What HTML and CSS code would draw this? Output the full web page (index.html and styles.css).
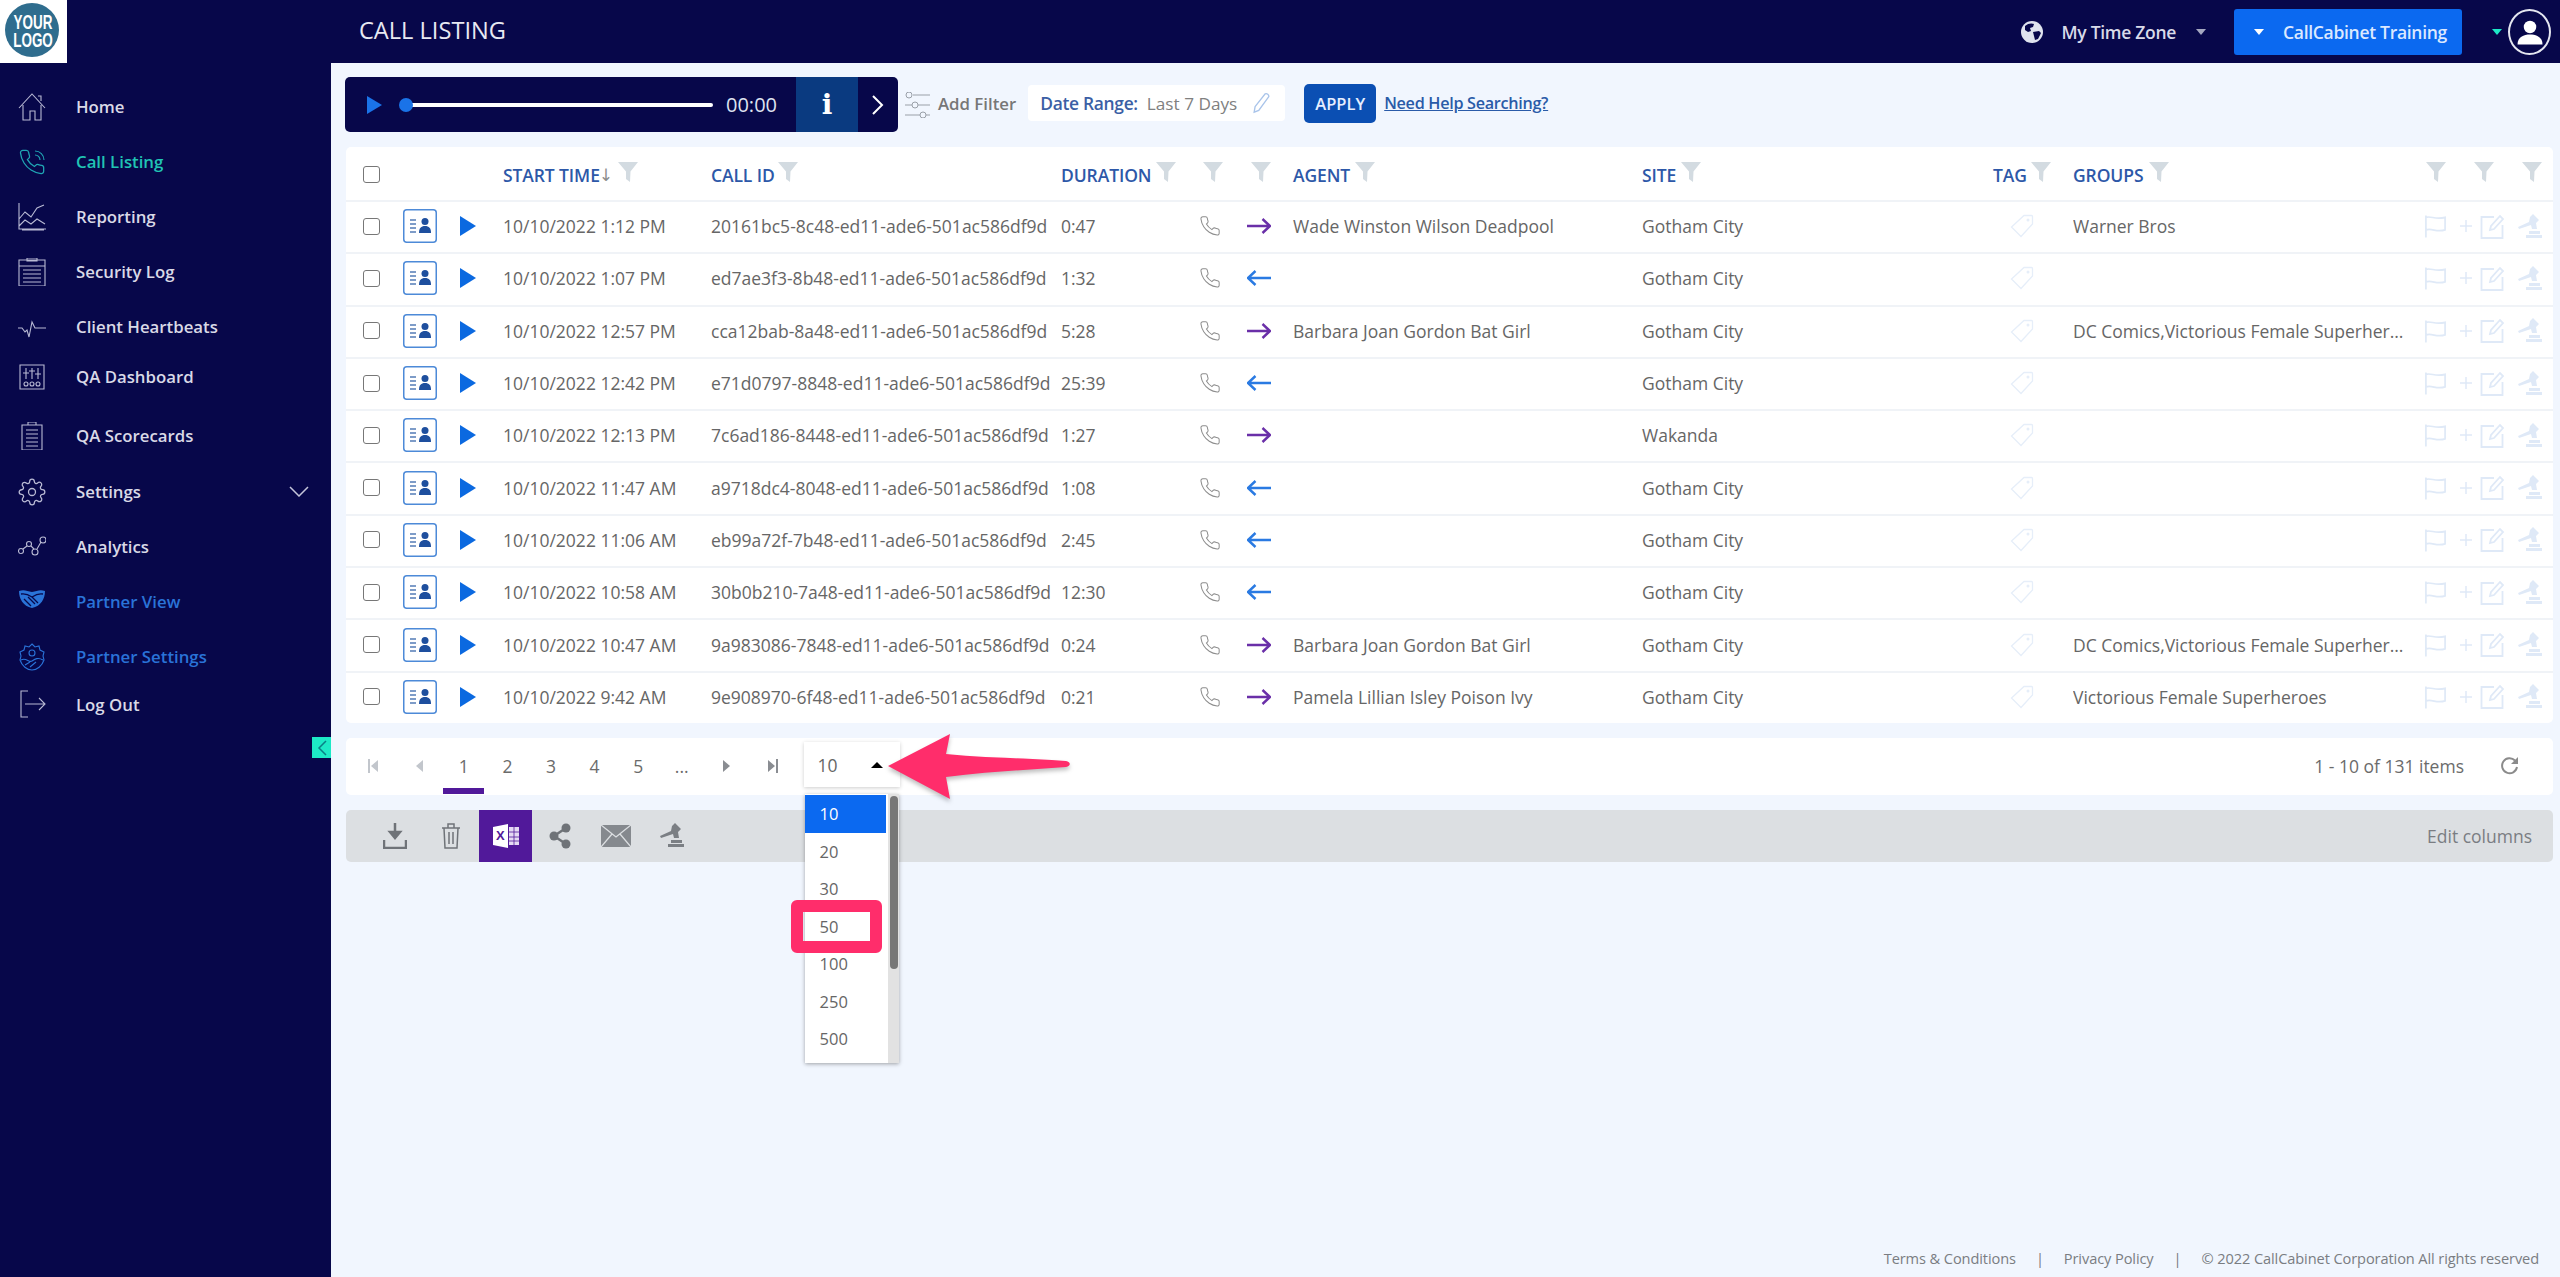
FILE: index.html
```html
<!DOCTYPE html>
<html lang="en">
<head>
<meta charset="utf-8">
<title>Call Listing</title>
<link rel="stylesheet" href="styles.css">
</head>
<body>
<svg class="sprite" aria-hidden="true">
  <symbol id="i-filter" viewBox="0 0 20 20"><path d="M0 0h20L12.5 9.5 12 20l-4-3V9.500z" fill="currentColor"/></symbol>
  <symbol id="i-phone" viewBox="0 0 24 24"><path fill="none" stroke="currentColor" stroke-width="1.1" d="M22 16.920v3a2 2 0 0 1-2.180 2 19.790 19.790 0 0 1-8.630-3.070 19.500 19.500 0 0 1-6-6 19.790 19.790 0 0 1-3.070-8.670A2 2 0 0 1 4.110 2h3a2 2 0 0 1 2 1.720 12.840 12.840 0 0 0 .7 2.810 2 2 0 0 1-.45 2.110L8.090 9.910a16 16 0 0 0 6 6l1.270-1.270a2 2 0 0 1 2.110-.45 12.840 12.840 0 0 0 2.810.7A2 2 0 0 1 22 16.92z"/></symbol>
  <symbol id="i-right" viewBox="0 0 24 16"><path fill="none" stroke="currentColor" stroke-width="2.400" d="M0 8h23M15.500 1l7.500 7-7.500 7"/></symbol>
  <symbol id="i-left" viewBox="0 0 24 16"><path fill="none" stroke="currentColor" stroke-width="2.400" d="M24 8H1M8.500 1L1 8l7.500 7"/></symbol>
  <symbol id="i-tag" viewBox="0 0 24 24"><path fill="none" stroke="currentColor" stroke-width="1.300" d="M14 1.500h7.500a1 1 0 0 1 1 1V10L11 22.500 1.500 13z"/><circle cx="18" cy="6" r="1.500" fill="currentColor"/></symbol>
  <symbol id="i-file" viewBox="0 0 34 34"><rect x=".75" y=".75" width="32.500" height="32.500" rx="3" fill="#fff" stroke="#4d8ad8" stroke-width="1.500"/><path d="M7 10h6v2H7zM7 14h6v2H7zM7 18h6v2H7zM7 22h6v2H7z" fill="#7e9cc8"/><circle cx="22" cy="12.500" r="3.500" fill="#1e4f9e"/><path d="M16 24c0-5 2-7 6-7s6 2 6 7z" fill="#1e4f9e"/></symbol>
  <symbol id="i-flag" viewBox="0 0 24 24"><path fill="none" stroke="currentColor" stroke-width="1.800" d="M2 1v23M2 3c6-2 9 3 20 0v13c-9 3-13-2-20 0"/></symbol>
  <symbol id="i-plus" viewBox="0 0 12 12"><path fill="none" stroke="currentColor" stroke-width="1.500" d="M6 0v12M0 6h12"/></symbol>
  <symbol id="i-edit" viewBox="0 0 25 25"><path fill="none" stroke="currentColor" stroke-width="1.800" d="M14 3H1.500v21h21V11M10 16l1-4L20 2l3 3-9 10z"/></symbol>
  <symbol id="i-gavel" viewBox="0 0 25 25"><path fill="currentColor" d="M12 3l3-3 6 6-3 3 1 6h-5l-1-4-12 4-1-2 11-5zM11 17h11v3H11zM8 21h16v3H8z"/></symbol>
  <symbol id="i-gear" viewBox="0 0 24 24"><circle cx="12" cy="12" r="3" fill="none" stroke="currentColor"/><path fill="none" stroke="currentColor" d="M19.400 15a1.650 1.650 0 0 0 .33 1.820l.06.06a2 2 0 0 1 0 2.830 2 2 0 0 1-2.830 0l-.06-.06a1.650 1.650 0 0 0-1.820-.33 1.650 1.650 0 0 0-1 1.510V21a2 2 0 0 1-2 2 2 2 0 0 1-2-2v-.09A1.650 1.650 0 0 0 9 19.400a1.650 1.650 0 0 0-1.820.33l-.06.06a2 2 0 0 1-2.830 0 2 2 0 0 1 0-2.830l.06-.06a1.650 1.650 0 0 0 .33-1.820 1.650 1.650 0 0 0-1.510-1H3a2 2 0 0 1-2-2 2 2 0 0 1 2-2h.09A1.650 1.650 0 0 0 4.600 9a1.650 1.650 0 0 0-.33-1.820l-.06-.06a2 2 0 0 1 0-2.830 2 2 0 0 1 2.830 0l.06.06a1.650 1.650 0 0 0 1.820.33H9a1.650 1.650 0 0 0 1-1.510V3a2 2 0 0 1 2-2 2 2 0 0 1 2 2v.09a1.650 1.650 0 0 0 1 1.510 1.650 1.650 0 0 0 1.820-.33l.06-.06a2 2 0 0 1 2.830 0 2 2 0 0 1 0 2.830l-.06.06a1.650 1.650 0 0 0-.33 1.820V9a1.650 1.650 0 0 0 1.510 1H21a2 2 0 0 1 2 2 2 2 0 0 1-2 2h-.09a1.650 1.650 0 0 0-1.510 1z"/></symbol>
  <symbol id="i-hands" viewBox="0 0 28 28"><path fill="currentColor" d="M1 3c5-2 8 0 13 1 5-1 8-3 13-1 0 8-4 15-13 17C5 18 1 11 1 3z"/><path fill="none" stroke="#07074a" stroke-width="1.300" d="M3 6c5-1 8 1 11 3 3-2 6-4 11-3M6 11l7 7M10 9l7 7M14 9l6 6"/></symbol>
</svg>

<header class="topbar">
  <div class="logo">
    <svg viewBox="0 0 67 63" width="67" height="63">
      <circle cx="32" cy="30" r="27" fill="#2f6d8e"/>
      <text transform="translate(33 29) scale(1 1.5)" class="logo-text">YOUR</text>
      <text transform="translate(33 47) scale(1 1.5)" class="logo-text">LOGO</text>
    </svg>
  </div>
  <h1 class="page-title">CALL LISTING</h1>
  <div class="top-right">
    <svg class="globe" viewBox="0 0 24 24" width="24" height="24"><circle cx="12" cy="12" r="11" fill="#dfe3ee"/><path fill="#07074a" d="M5 6c3-3 7-3 9-2l-1 3-3 1 1 3-3 1-3-2zM13 12l6-1 2 2-3 6-3 1-1-4z"/></svg>
    <span class="tz-label">My Time Zone</span>
    <span class="caret caret-grey"></span>
    <button class="org-btn"><span class="caret caret-white"></span><span>CallCabinet Training</span></button>
    <span class="caret caret-teal"></span>
    <span class="avatar"><svg viewBox="0 0 24 24" width="30" height="30"><circle cx="12" cy="8" r="5" fill="#fff"/><path d="M2 22c0-6 5-8 10-8s10 2 10 8z" fill="#fff"/></svg></span>
  </div>
</header>

<div class="shell">
  <nav class="sidebar">
    <a class="nav-item"><svg class="nav-icon" viewBox="0 0 28 28"><path d="M1 15L14 1l13 14M5 12v15h7v-9h5v9h6V12M20 3h3v5" /></svg><span>Home</span></a>
    <a class="nav-item is-active"><svg class="nav-icon" viewBox="0 0 28 28"><use href="#i-phone" width="28" height="28"/><path d="M17 7a5 5 0 0 1 5 5M17 3a9 9 0 0 1 9 9"/></svg><span>Call Listing</span></a>
    <a class="nav-item"><svg class="nav-icon" viewBox="0 0 28 28"><path d="M1 0v26h27M1 16l6-7 6 5 6-9 7-3M1 23l6-6 6 4 6-5 8 5M4 27h22"/></svg><span>Reporting</span></a>
    <a class="nav-item"><svg class="nav-icon" viewBox="0 0 28 28"><path d="M1 2h26v26H1zM1 8h26M9 0h10v3H9zM5 12h18M5 16h18M5 20h18M5 24h18" /></svg><span>Security Log</span></a>
    <a class="nav-item"><svg class="nav-icon" viewBox="0 0 28 28"><path d="M0 15h4l3 4 2-2 2 7 3-15 3 6h11"/></svg><span>Client Heartbeats</span></a>
    <a class="nav-item nav-up"><svg class="nav-icon" viewBox="0 0 28 28"><path d="M2 2h24v24H2zM8 5v11M14 5v11M20 5v11M5 10h6M11 8h6M17 11h6"/><circle cx="8" cy="21" r="2"/><circle cx="14" cy="21" r="2"/><circle cx="20" cy="21" r="2"/></svg><span>QA Dashboard</span></a>
    <a class="nav-item nav-down"><svg class="nav-icon" viewBox="0 0 28 28"><path d="M4 3h20v25H4zM10 3V0h8v3M8 8h12M8 12h12M8 16h12M8 20h12M8 24h12"/></svg><span>QA Scorecards</span></a>
    <a class="nav-item"><svg class="nav-icon nav-solid" viewBox="0 0 28 28"><use href="#i-gear" width="28" height="28"/></svg><span>Settings</span><svg class="nav-chevron" viewBox="0 0 20 11"><path d="M1 1l9 9 9-9"/></svg></a>
    <a class="nav-item"><svg class="nav-icon" viewBox="0 0 28 28"><circle cx="3" cy="18" r="2.500"/><circle cx="11" cy="11" r="2.500"/><circle cx="17" cy="19" r="3"/><circle cx="25" cy="7" r="3"/><path d="M5 16l4-3M13 13l3 3M19 16l4-7"/></svg><span>Analytics</span></a>
    <a class="nav-item is-partner"><svg class="nav-icon-fill" viewBox="0 0 28 28"><use href="#i-hands" width="28" height="28"/></svg><span>Partner View</span></a>
    <a class="nav-item is-partner"><svg class="nav-icon" viewBox="0 0 28 28"><path d="M14 1l3 3 4-1 1 4 4 2-1 4 1 4c-2 6-7 10-12 10S4 23 2 17l1-4-1-4 4-2 1-4 4 1z"/><circle cx="14" cy="10" r="3"/><path d="M3 17c5-3 8 3 11 1s6-4 11-1M7 22l5-3M12 24l6-5"/></svg><span>Partner Settings</span></a>
    <a class="nav-item nav-up-more"><svg class="nav-icon" viewBox="0 0 28 28"><path d="M10 1H3v26h7M7 14h20M21 8l6 6-6 6"/></svg><span>Log Out</span></a>
    <span class="collapse-tab"><svg viewBox="0 0 10 16" width="10" height="16"><path d="M9 1L2 8l7 7" fill="none" stroke="#0a7f86" stroke-width="1.500"/></svg></span>
  </nav>

  <main class="content">
    <section class="filter-bar">
      <div class="player">
        <svg class="player-play" viewBox="0 0 15 18" width="15" height="18"><path d="M0 0l15 9-15 9z" fill="#1a73e8"/></svg>
        <div class="player-track"><span class="player-knob"></span></div>
        <span class="player-time">00:00</span>
        <span class="player-info">i</span>
        <svg class="player-next" viewBox="0 0 12 20" width="12" height="20"><path d="M1 1l9 9-9 9" fill="none" stroke="#fff" stroke-width="2"/></svg>
      </div>
      <svg class="filter-icon" viewBox="0 0 25 26" width="25" height="26"><g fill="none" stroke="#9aa0a8"><path d="M8 3h17M0 13h7M13 13h12M0 23h15M21 23h4"/><circle cx="4" cy="3" r="3"/><circle cx="10" cy="13" r="3"/><circle cx="18" cy="23" r="3"/></g></svg>
      <span class="add-filter">Add Filter</span>
      <div class="date-box">
        <span class="date-label">Date Range:</span>
        <span class="date-value">Last 7 Days</span>
        <svg viewBox="0 0 20 24" width="19" height="22"><path d="M3 16L14 2a3 3 0 0 1 4 3L7 20l-5 2z" fill="none" stroke="#a9c4ea" stroke-width="1.500"/></svg>
      </div>
      <button class="apply-btn">APPLY</button>
      <a class="help-link">Need Help Searching?</a>
    </section>

    <section class="table">
      <div class="row head">
        <span class="c-check"><span class="check"></span></span>
        <span></span>
        <span></span>
        <span class="th th-time">START TIME<span class="sort">↓</span><svg class="fil"><use href="#i-filter"/></svg></span>
        <span class="th th-id">CALL ID<svg class="fil"><use href="#i-filter"/></svg></span>
        <span class="th th-dur">DURATION<svg class="fil"><use href="#i-filter"/></svg></span>
        <span class="th th-mini"><svg class="fil"><use href="#i-filter"/></svg></span>
        <span class="th th-mini"><svg class="fil"><use href="#i-filter"/></svg></span>
        <span class="th th-agent">AGENT<svg class="fil"><use href="#i-filter"/></svg></span>
        <span class="th th-site">SITE<svg class="fil"><use href="#i-filter"/></svg></span>
        <span class="th th-tag">TAG<svg class="fil"><use href="#i-filter"/></svg></span>
        <span class="th th-groups">GROUPS<svg class="fil"><use href="#i-filter"/></svg></span>
        <span class="th th-acts"><svg class="fil"><use href="#i-filter"/></svg><svg class="fil"><use href="#i-filter"/></svg><svg class="fil"><use href="#i-filter"/></svg></span>
      </div>

      <div class="row">
        <span class="c-check"><span class="check"></span></span><svg class="file"><use href="#i-file"/></svg><svg class="play" viewBox="0 0 16 20"><path d="M0 0l16 10L0 20z"/></svg>
        <span>10/10/2022 1:12 PM</span><span>20161bc5-8c48-ed11-ade6-501ac586df9d</span><span>0:47</span>
        <svg class="phone"><use href="#i-phone"/></svg><svg class="arrow out"><use href="#i-right"/></svg>
        <span>Wade Winston Wilson Deadpool</span><span>Gotham City</span><svg class="tag"><use href="#i-tag"/></svg><span class="groups">Warner Bros</span>
        <span class="acts"><svg class="a-flag"><use href="#i-flag"/></svg><svg class="a-plus"><use href="#i-plus"/></svg><svg class="a-edit"><use href="#i-edit"/></svg><svg class="a-gavel"><use href="#i-gavel"/></svg></span>
      </div>
      <div class="row">
        <span class="c-check"><span class="check"></span></span><svg class="file"><use href="#i-file"/></svg><svg class="play" viewBox="0 0 16 20"><path d="M0 0l16 10L0 20z"/></svg>
        <span>10/10/2022 1:07 PM</span><span>ed7ae3f3-8b48-ed11-ade6-501ac586df9d</span><span>1:32</span>
        <svg class="phone"><use href="#i-phone"/></svg><svg class="arrow in"><use href="#i-left"/></svg>
        <span></span><span>Gotham City</span><svg class="tag"><use href="#i-tag"/></svg><span class="groups"></span>
        <span class="acts"><svg class="a-flag"><use href="#i-flag"/></svg><svg class="a-plus"><use href="#i-plus"/></svg><svg class="a-edit"><use href="#i-edit"/></svg><svg class="a-gavel"><use href="#i-gavel"/></svg></span>
      </div>
      <div class="row">
        <span class="c-check"><span class="check"></span></span><svg class="file"><use href="#i-file"/></svg><svg class="play" viewBox="0 0 16 20"><path d="M0 0l16 10L0 20z"/></svg>
        <span>10/10/2022 12:57 PM</span><span>cca12bab-8a48-ed11-ade6-501ac586df9d</span><span>5:28</span>
        <svg class="phone"><use href="#i-phone"/></svg><svg class="arrow out"><use href="#i-right"/></svg>
        <span>Barbara Joan Gordon Bat Girl</span><span>Gotham City</span><svg class="tag"><use href="#i-tag"/></svg><span class="groups">DC Comics,Victorious Female Superheroes</span>
        <span class="acts"><svg class="a-flag"><use href="#i-flag"/></svg><svg class="a-plus"><use href="#i-plus"/></svg><svg class="a-edit"><use href="#i-edit"/></svg><svg class="a-gavel"><use href="#i-gavel"/></svg></span>
      </div>
      <div class="row">
        <span class="c-check"><span class="check"></span></span><svg class="file"><use href="#i-file"/></svg><svg class="play" viewBox="0 0 16 20"><path d="M0 0l16 10L0 20z"/></svg>
        <span>10/10/2022 12:42 PM</span><span>e71d0797-8848-ed11-ade6-501ac586df9d</span><span>25:39</span>
        <svg class="phone"><use href="#i-phone"/></svg><svg class="arrow in"><use href="#i-left"/></svg>
        <span></span><span>Gotham City</span><svg class="tag"><use href="#i-tag"/></svg><span class="groups"></span>
        <span class="acts"><svg class="a-flag"><use href="#i-flag"/></svg><svg class="a-plus"><use href="#i-plus"/></svg><svg class="a-edit"><use href="#i-edit"/></svg><svg class="a-gavel"><use href="#i-gavel"/></svg></span>
      </div>
      <div class="row">
        <span class="c-check"><span class="check"></span></span><svg class="file"><use href="#i-file"/></svg><svg class="play" viewBox="0 0 16 20"><path d="M0 0l16 10L0 20z"/></svg>
        <span>10/10/2022 12:13 PM</span><span>7c6ad186-8448-ed11-ade6-501ac586df9d</span><span>1:27</span>
        <svg class="phone"><use href="#i-phone"/></svg><svg class="arrow out"><use href="#i-right"/></svg>
        <span></span><span>Wakanda</span><svg class="tag"><use href="#i-tag"/></svg><span class="groups"></span>
        <span class="acts"><svg class="a-flag"><use href="#i-flag"/></svg><svg class="a-plus"><use href="#i-plus"/></svg><svg class="a-edit"><use href="#i-edit"/></svg><svg class="a-gavel"><use href="#i-gavel"/></svg></span>
      </div>
      <div class="row">
        <span class="c-check"><span class="check"></span></span><svg class="file"><use href="#i-file"/></svg><svg class="play" viewBox="0 0 16 20"><path d="M0 0l16 10L0 20z"/></svg>
        <span>10/10/2022 11:47 AM</span><span>a9718dc4-8048-ed11-ade6-501ac586df9d</span><span>1:08</span>
        <svg class="phone"><use href="#i-phone"/></svg><svg class="arrow in"><use href="#i-left"/></svg>
        <span></span><span>Gotham City</span><svg class="tag"><use href="#i-tag"/></svg><span class="groups"></span>
        <span class="acts"><svg class="a-flag"><use href="#i-flag"/></svg><svg class="a-plus"><use href="#i-plus"/></svg><svg class="a-edit"><use href="#i-edit"/></svg><svg class="a-gavel"><use href="#i-gavel"/></svg></span>
      </div>
      <div class="row">
        <span class="c-check"><span class="check"></span></span><svg class="file"><use href="#i-file"/></svg><svg class="play" viewBox="0 0 16 20"><path d="M0 0l16 10L0 20z"/></svg>
        <span>10/10/2022 11:06 AM</span><span>eb99a72f-7b48-ed11-ade6-501ac586df9d</span><span>2:45</span>
        <svg class="phone"><use href="#i-phone"/></svg><svg class="arrow in"><use href="#i-left"/></svg>
        <span></span><span>Gotham City</span><svg class="tag"><use href="#i-tag"/></svg><span class="groups"></span>
        <span class="acts"><svg class="a-flag"><use href="#i-flag"/></svg><svg class="a-plus"><use href="#i-plus"/></svg><svg class="a-edit"><use href="#i-edit"/></svg><svg class="a-gavel"><use href="#i-gavel"/></svg></span>
      </div>
      <div class="row">
        <span class="c-check"><span class="check"></span></span><svg class="file"><use href="#i-file"/></svg><svg class="play" viewBox="0 0 16 20"><path d="M0 0l16 10L0 20z"/></svg>
        <span>10/10/2022 10:58 AM</span><span>30b0b210-7a48-ed11-ade6-501ac586df9d</span><span>12:30</span>
        <svg class="phone"><use href="#i-phone"/></svg><svg class="arrow in"><use href="#i-left"/></svg>
        <span></span><span>Gotham City</span><svg class="tag"><use href="#i-tag"/></svg><span class="groups"></span>
        <span class="acts"><svg class="a-flag"><use href="#i-flag"/></svg><svg class="a-plus"><use href="#i-plus"/></svg><svg class="a-edit"><use href="#i-edit"/></svg><svg class="a-gavel"><use href="#i-gavel"/></svg></span>
      </div>
      <div class="row">
        <span class="c-check"><span class="check"></span></span><svg class="file"><use href="#i-file"/></svg><svg class="play" viewBox="0 0 16 20"><path d="M0 0l16 10L0 20z"/></svg>
        <span>10/10/2022 10:47 AM</span><span>9a983086-7848-ed11-ade6-501ac586df9d</span><span>0:24</span>
        <svg class="phone"><use href="#i-phone"/></svg><svg class="arrow out"><use href="#i-right"/></svg>
        <span>Barbara Joan Gordon Bat Girl</span><span>Gotham City</span><svg class="tag"><use href="#i-tag"/></svg><span class="groups">DC Comics,Victorious Female Superheroes</span>
        <span class="acts"><svg class="a-flag"><use href="#i-flag"/></svg><svg class="a-plus"><use href="#i-plus"/></svg><svg class="a-edit"><use href="#i-edit"/></svg><svg class="a-gavel"><use href="#i-gavel"/></svg></span>
      </div>
      <div class="row">
        <span class="c-check"><span class="check"></span></span><svg class="file"><use href="#i-file"/></svg><svg class="play" viewBox="0 0 16 20"><path d="M0 0l16 10L0 20z"/></svg>
        <span>10/10/2022 9:42 AM</span><span>9e908970-6f48-ed11-ade6-501ac586df9d</span><span>0:21</span>
        <svg class="phone"><use href="#i-phone"/></svg><svg class="arrow out"><use href="#i-right"/></svg>
        <span>Pamela Lillian Isley Poison Ivy</span><span>Gotham City</span><svg class="tag"><use href="#i-tag"/></svg><span class="groups">Victorious Female Superheroes</span>
        <span class="acts"><svg class="a-flag"><use href="#i-flag"/></svg><svg class="a-plus"><use href="#i-plus"/></svg><svg class="a-edit"><use href="#i-edit"/></svg><svg class="a-gavel"><use href="#i-gavel"/></svg></span>
      </div>
    </section>

    <section class="pager">
      <span class="pg-nav"><svg viewBox="0 0 10 14" width="10" height="14"><path d="M0 0h2v14H0zM10 1v12L3 7z"/></svg></span>
      <span class="pg-nav"><svg viewBox="0 0 7 14" width="7" height="14"><path d="M7 1v12L0 7z"/></svg></span>
      <span class="pg-num is-current">1</span>
      <span class="pg-num">2</span>
      <span class="pg-num">3</span>
      <span class="pg-num">4</span>
      <span class="pg-num">5</span>
      <span class="pg-num">...</span>
      <span class="pg-nav pg-dark"><svg viewBox="0 0 7 14" width="7" height="14"><path d="M0 1v12l7-6z"/></svg></span>
      <span class="pg-nav pg-dark"><svg viewBox="0 0 10 14" width="10" height="14"><path d="M8 0h2v14H8zM0 1v12l7-6z"/></svg></span>
      <div class="size-select">
        <span>10</span><span class="caret-up"></span>
        <ul class="size-menu">
          <li class="is-selected">10</li><li>20</li><li>30</li><li>50</li><li>100</li><li>250</li><li>500</li>
          <li class="menu-scroll"><span class="menu-thumb"></span></li>
        </ul>
        <span class="highlight"></span>
        <svg class="callout" viewBox="0 0 182 66" width="182" height="66"><path d="M0 32L62 0l-4 20c40 4 80 4 120 7 5 1 5 5 0 6-40 3-82 5-120 10l4 22z" fill="#ff2d6b"/></svg>
      </div>
      <span class="pg-info">1 - 10 of 131 items</span>
      <svg class="pg-refresh" viewBox="0 0 20 20" width="20" height="20"><path d="M17 11a7.500 7.500 0 1 1-2-6.500" fill="none" stroke="#8b8b8b" stroke-width="2"/><path d="M18 1v7h-7z" fill="#8b8b8b"/></svg>
    </section>

    <section class="toolbar">
      <span class="tool"><svg viewBox="0 0 24 26" width="24" height="26"><path d="M12 0v13M7 9l5 6 5-6z" fill="#6f7378" stroke="#6f7378" stroke-width="2.500"/><path d="M1 17v8h22v-8" fill="none" stroke="#6f7378" stroke-width="2.500"/></svg></span>
      <span class="tool"><svg viewBox="0 0 20 26" width="20" height="26"><path d="M1 5h18M7 5V1h6v4M3 5l1 20h12l1-20M8 9v12M12 9v12" fill="none" stroke="#6f7378" stroke-width="1.500"/></svg></span>
      <span class="tool tool-on"><svg viewBox="0 0 26 24" width="26" height="24"><path d="M0 3l15-3v24L0 21z" fill="#fff"/><path d="M16 3h10v18H16z" fill="#e4d9f3"/><path d="M21 3v18M16 8h10M16 13h10M16 17h10" stroke="#51199a" stroke-width=".8"/><text x="3" y="16" class="xl-text">X</text></svg></span>
      <span class="tool"><svg viewBox="0 0 22 26" width="22" height="26"><path d="M17 5L5 13l12 8" fill="none" stroke="#6f7378" stroke-width="2.500"/><circle cx="17" cy="5" r="4.500" fill="#6f7378"/><circle cx="5" cy="13" r="4.500" fill="#6f7378"/><circle cx="17" cy="21" r="4.500" fill="#6f7378"/></svg></span>
      <span class="tool"><svg viewBox="0 0 30 22" width="30" height="22"><path d="M0 0h30v22H0z" fill="#85898e"/><path d="M0 0l15 12L30 0M0 22l11-13M30 22L19 9" fill="none" stroke="#dcdfe2" stroke-width="1.300"/></svg></span>
      <span class="tool"><svg class="tool-gavel"><use href="#i-gavel"/></svg></span>
      <span class="edit-cols">Edit columns</span>
    </section>

    <footer class="footer">
      <span>Terms &amp; Conditions</span><span class="sep">|</span><span>Privacy Policy</span><span class="sep">|</span><span>© 2022 CallCabinet Corporation All rights reserved</span>
    </footer>
  </main>
</div>
</body>
</html>
```
FILE: styles.css
```css
* { box-sizing: border-box; }
html, body { margin: 0; height: 100%; overflow: hidden; }
body {
  font-family: "Open Sans", "Liberation Sans", sans-serif;
  font-size: 17.500px;
  color: #666;
  background: #f1f6fe;
  display: flex;
  flex-direction: column;
}
.sprite { display: none; }

/* top bar */
.topbar {
  height: 63px;
  flex: none;
  background: #07074a;
  display: flex;
  align-items: center;
  color: #fff;
}
.logo { width: 67px; height: 63px; background: #fff; flex: none; }
.logo svg { display: block; }
.logo-text {
  font-family: "Liberation Sans", sans-serif;
  font-weight: 700;
  font-size: 13.500px;
  fill: #fff;
  text-anchor: middle;
}
.page-title {
  margin: -4px 0 0 292px;
  font-size: 23.600px;
  font-weight: 500;
  color: #e8e9f2;
}
.top-right { margin-left: auto; display: flex; align-items: center; padding-right: 9px; }
.globe { margin-right: 18px; }
.tz-label { font-size: 17.500px; font-weight: 600; color: #d8dae8; letter-spacing: -.3px; }
.caret { width: 0; height: 0; border-left: 5px solid transparent; border-right: 5px solid transparent; display: inline-block; }
.caret-grey { border-top: 6px solid #a4a7c0; margin: 0 28px 0 20px; }
.caret-white { border-top: 6px solid #fff; margin-right: 19px; }
.caret-teal { border-top: 6px solid #1de9c6; margin: 0 6px 0 30px; }
.org-btn {
  width: 228px;
  height: 46px;
  border: 0;
  border-radius: 3px;
  background: #0b69f0;
  color: #dbe8ff;
  font: 600 17.500px "Open Sans", sans-serif;
  letter-spacing: -.3px;
  display: flex;
  align-items: center;
  padding: 0 0 0 20px;
}
.avatar {
  width: 43px;
  height: 46px;
  border: 2px solid #e4e6f0;
  border-radius: 50%;
  display: flex;
  align-items: center;
  justify-content: center;
}

/* layout */
.shell { flex: 1; display: flex; min-height: 0; }

/* sidebar */
.sidebar {
  width: 331px;
  flex: none;
  background: #07074a;
  padding-top: 16px;
  position: relative;
}
.nav-item {
  height: 55px;
  display: flex;
  align-items: center;
  padding-left: 18px;
  font-size: 16.800px;
  font-weight: 600;
  color: #d9d9e6;
}
.nav-up { margin-top: -3px; height: 51px; }
.nav-down { margin-top: 3px; height: 59px; padding-top: 2px; }
.nav-up-more { margin-top: -4px; height: 48px; }
.nav-icon { width: 28px; height: 28px; margin-right: 30px; fill: none; stroke: #b9bad4; stroke-width: 1.100; color: #b9bad4; flex: none; }
.nav-icon-fill { width: 28px; height: 28px; margin-right: 30px; color: #2a73d8; flex: none; }
.nav-solid { stroke: none; }
.nav-chevron { width: 20px; height: 11px; margin-left: auto; margin-right: 22px; fill: none; stroke: #c4c5da; stroke-width: 1.500; }
.is-active { color: #20c4b4; }
.is-active .nav-icon { stroke: #20a6b4; color: #20a6b4; }
.is-partner { color: #2a73d8; }
.is-partner .nav-icon { stroke: #2a73d8; }
.collapse-tab {
  position: absolute;
  left: 312px;
  top: 674px;
  width: 19px;
  height: 21px;
  background: #1de9c6;
  display: flex;
  align-items: center;
  justify-content: center;
}

/* main */
.content {
  flex: 1;
  min-width: 0;
  padding: 14px 7px 0 14px;
  display: flex;
  flex-direction: column;
}

/* filter bar */
.filter-bar { height: 55px; display: flex; align-items: center; flex: none; }
.player {
  width: 553px;
  height: 55px;
  background: #07074a;
  border-radius: 5px;
  display: flex;
  align-items: center;
  overflow: hidden;
  padding-left: 22px;
}
.player-play { flex: none; }
.player-track { position: relative; width: 307px; height: 4px; background: #fff; margin-left: 24px; border-radius: 2px; }
.player-knob { position: absolute; left: -7px; top: -5px; width: 14px; height: 14px; border-radius: 50%; background: #1a73e8; }
.player-time { margin-left: 13px; width: 70px; font-size: 20px; color: #dfe2f0; }
.player-info {
  width: 62px;
  height: 55px;
  background: #0a3a80;
  color: #fff;
  font: 700 28px "DejaVu Serif", serif;
  display: flex;
  align-items: center;
  justify-content: center;
}
.player-next { margin-left: 14px; }
.filter-icon { margin-left: 7px; }
.add-filter { margin: 0 0 3px 8px; font-size: 16.800px; font-weight: 600; color: #777; }
.date-box {
  width: 257px;
  height: 36px;
  margin: 0 0 3px 12px;
  background: #fff;
  border-radius: 4px;
  display: flex;
  align-items: center;
  padding-left: 12px;
}
.date-label { font-size: 17.400px; font-weight: 600; color: #3b5fa5; letter-spacing: -.3px; }
.date-value { margin-left: 9px; margin-right: 15px; font-size: 17.200px; color: #808080; }
.apply-btn {
  width: 72px;
  height: 39px;
  margin: 0 0 3px 19px;
  border: 0;
  border-radius: 5px;
  background: #0b4fb3;
  color: #e6eeff;
  font: 600 16.500px "Open Sans", sans-serif;
  padding: 0;
}
.help-link { margin: 0 0 3px 8px; font-size: 16.200px; font-weight: 600; color: #2a5ba8; text-decoration: underline; letter-spacing: -.3px; }

/* table */
.table {
  margin: 15px 0 0 1px;
  background: #fff;
  border-radius: 5px;
  flex: none;
}
.row {
  height: 52.300px;
  display: grid;
  grid-template-columns: 57px 57px 43px 208px 350px 138px 48px 46px 349px 351px 80px 351px 1fr;
  align-items: center;
  border-top: 2px solid #f0f3f7;
  padding-bottom: 2px;
  white-space: nowrap;
}
.row.head { height: 53px; border-top: 0; padding: 2px 0 0; }
.c-check { padding-left: 17px; display: flex; }
.check { width: 17px; height: 17px; border: 1.500px solid #777; border-radius: 3px; background: #fff; }
.file { width: 34px; height: 34px; }
.play { width: 16px; height: 20px; fill: #0b69e0; }
.phone { width: 22px; height: 22px; color: #8d8d8d; }
.arrow { width: 24px; height: 16px; }
.arrow.out { color: #6a2fa8; }
.arrow.in { color: #2a7ae2; }
.tag { width: 24px; height: 24px; margin-left: 17px; color: #e6eef9; }
.groups { padding-right: 20px; overflow: hidden; text-overflow: ellipsis; }
.acts { display: flex; align-items: center; color: #dfe9f7; }
.a-flag { width: 23px; height: 24px; }
.a-plus { width: 12px; height: 12px; margin-left: 13px; }
.a-edit { width: 25px; height: 25px; margin-left: 8px; }
.a-gavel { width: 25px; height: 25px; margin-left: 13px; }
.th {
  display: flex;
  align-items: center;
  font-weight: 600;
  color: #2d58a8;
  letter-spacing: -.1px;
  height: 100%;
  position: relative;
}
.fil { width: 20px; height: 20px; color: #d3dbe1; flex: none; margin-left: 8px; margin-top: -6px; }
.sort { font-family: "DejaVu Sans", sans-serif; font-size: 17px; color: #8d8d8d; font-weight: 400; margin-left: -1px; width: 14px; }
.th-time .fil { margin-left: 5px; }
.th-id .fil { margin-left: 3px; }
.th-dur .fil { margin-left: 5px; }
.th-mini .fil { margin-left: 4px; }
.th-agent .fil { margin-left: 5px; }
.th-site .fil { margin-left: 5px; }
.th-tag .fil { margin-left: 4px; }
.th-groups .fil { margin-left: 6px; }
.th-acts .fil { margin-left: 0; margin-right: 28px; }
.th-acts { padding-left: 2px; }

/* pager */
.pager {
  margin: 15px 0 0 1px;
  height: 57px;
  background: #fff;
  border-radius: 5px;
  display: flex;
  align-items: center;
  padding: 0 33px 0 4px;
  flex: none;
  position: relative;
  z-index: 2;
}
.pg-nav { width: 46px; display: flex; justify-content: center; fill: #c2c6cc; }
.pg-dark { fill: #8a8d92; }
.pg-num { width: 43.600px; height: 57px; display: flex; align-items: center; justify-content: center; position: relative; color: #6b6b6b; }
.is-current::after {
  content: "";
  position: absolute;
  left: 1px;
  right: 1.600px;
  bottom: 1px;
  height: 6px;
  background: #51199a;
}
.size-select {
  position: relative;
  width: 96px;
  height: 45px;
  margin-left: 8px;
  margin-top: -3px;
  background: #fff;
  box-shadow: 0 1px 4px rgba(0,0,0,.2);
  padding-left: 14px;
  display: flex;
  align-items: center;
}
.caret-up { position: absolute; left: 67px; top: 20px; width: 0; height: 0; border-left: 6px solid transparent; border-right: 6px solid transparent; border-bottom: 6px solid #000; }
.size-menu {
  position: absolute;
  left: 1px;
  top: 52px;
  width: 94px;
  height: 269px;
  margin: 0;
  padding: 1px 0 0;
  list-style: none;
  background: #fff;
  box-shadow: 0 1px 4px rgba(0,0,0,.35);
}
.size-menu li { width: 81px; height: 37.500px; line-height: 37.500px; padding-left: 15px; font-size: 16.500px; }
.size-menu .is-selected { background: #0b69f0; color: #fff; }
.size-menu .menu-scroll {
  position: absolute;
  right: 0;
  top: 0;
  width: 11px;
  height: 100%;
  padding: 0;
  background: #e2e2e2;
}
.menu-thumb { position: absolute; left: 2px; top: 2px; width: 8px; height: 173px; border-radius: 4px; background: #777; }
.highlight {
  position: absolute;
  left: -13px;
  top: 158px;
  width: 91px;
  height: 53px;
  border: 12px solid #ff2d6b;
  border-radius: 6px;
}
.callout { position: absolute; left: 84px; top: -8px; filter: drop-shadow(0 3px 2px rgba(0,0,0,.25)); }
.pg-info { margin-left: auto; color: #6b6b6b; }
.pg-refresh { margin-left: 36px; }

/* toolbar */
.toolbar {
  margin: 15px 0 0 1px;
  height: 52px;
  background: #dcdfe2;
  border-radius: 5px;
  display: flex;
  align-items: center;
  padding: 0 21px 0 21px;
  flex: none;
}
.tool { width: 56px; height: 52px; display: flex; align-items: center; justify-content: center; }
.tool-on { width: 53px; background: #51199a; }
.tool-gavel { width: 25px; height: 25px; color: #7b7f84; }
.xl-text { font: 700 13px "Liberation Sans", sans-serif; fill: #51199a; }
.edit-cols { margin-left: auto; color: #7a7d82; }

/* footer */
.footer {
  margin-top: auto;
  height: 38px;
  padding-right: 14px;
  display: flex;
  justify-content: flex-end;
  align-items: center;
  font-size: 14.600px;
  color: #7a7d82;
  letter-spacing: -.1px;
}
.sep { margin: 0 20px; }
```
